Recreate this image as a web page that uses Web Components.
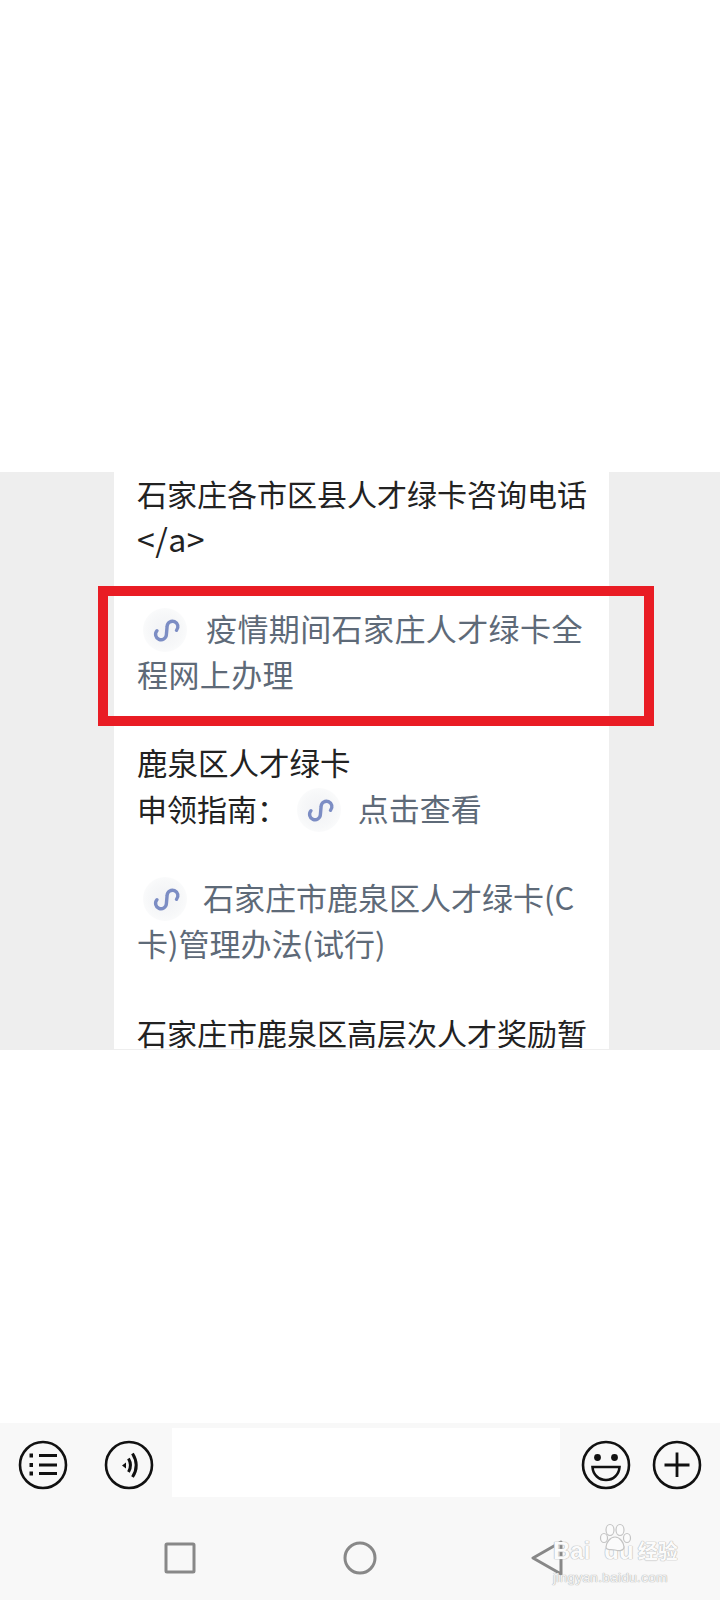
<!DOCTYPE html>
<html lang="zh">
<head>
<meta charset="utf-8">
<title>chat</title>
<style>
    html,body{margin:0;padding:0;background:#fff}
    body{font-family:"Noto Sans CJK SC","Liberation Sans",sans-serif}
</style>
</head>
<body>
<template id="miniTmpl">
    <style>
        /* line-height 0: the bigger font must not grow the 45.5px line */
        :host{display:inline;color:#5e6a78;font-size:31px;line-height:0}
        .ico{display:inline-block;width:var(--ico-w,69px);height:30px;vertical-align:-5px;position:relative}
        .glow{position:absolute;left:var(--glow-x,6px);top:-8px;width:44px;height:44px;border-radius:50%;background:radial-gradient(circle,#f1f2f5 0,#f7f8f9 55%,#fff 100%)}
        svg{position:absolute;left:var(--svg-x,14px);top:0}
    </style>
    <span class="ico"><span class="glow"></span><svg width="32" height="30" viewBox="0 0 32 30" fill="none"><path d="M6 14.700A5.400 5.400 0 1 0 15.400 18.500L16.100 10.500A5.400 5.400 0 1 1 25.500 14.300" stroke="#7c8dc4" stroke-width="3.400" stroke-linecap="round"/></svg></span><slot></slot>
</template>

<template id="bandTmpl">
    <style>
        :host{display:block;height:578px;background:#eeeeee;overflow:hidden;position:relative;flex:none}
        .col{margin-left:114px;width:495px;height:100%;background:#fff;box-sizing:border-box;padding:0 20px 0 23px;color:#222;font-size:30px;line-height:45.5px}
        .box{position:absolute;left:98px;top:114px;width:556px;height:140px;box-sizing:border-box;border:10px solid #e91c24}
    </style>
    <div class="col"><slot></slot></div>
    <div class="box"></div>
</template>

<template id="paraTmpl">
    <style>
        :host{display:block;white-space:nowrap;margin-bottom:var(--gap,43px)}
    </style>
    <slot></slot>
</template>

<template id="barTmpl">
    <style>
        :host{display:block;background:#f8f8f8;flex:none;height:177px;box-sizing:border-box;padding-top:5px;position:relative}
        .row{display:flex;align-items:center;height:69px}
        svg{display:block;flex:none}
        .input{width:388px;height:69px;background:#fff;margin:0 21px 0 18px;flex:none}
        .up{margin-top:5px}
        .sp1{margin-left:18px}
        .sp2{margin-left:36px}
        .sp4{margin-left:21px}
        .nav{display:flex;align-items:center;height:36px;margin-top:43px}
        .n1{margin-left:164px}
        .n2{margin-left:147px}
        .n3{margin-left:154px}
    </style>
    <div class="row">
        <svg class="sp1 up" width="50" height="50" viewBox="0 0 50 50" fill="none" stroke="#111" stroke-width="2.600"><circle cx="25" cy="25" r="23"/><path d="M21 15.500H39M21 25H39M21 33.500H39" stroke-width="3"/><path d="M11.500 15.500H15M11.500 25H15M11.500 33.500H15" stroke-width="4"/></svg>
        <svg class="sp2 up" width="50" height="50" viewBox="0 0 50 50" fill="none" stroke="#111" stroke-width="2.600"><circle cx="25" cy="25" r="23"/><path d="M18 25.500l4-3v6z" fill="#111" stroke="none"/><path d="M24.500 18.500Q28.500 25.500 24.500 32" stroke-width="3"/><path d="M28.500 13.500Q36 25.500 28.500 37" stroke-width="3"/></svg>
        <div class="input"></div>
        <svg class="up" width="50" height="50" viewBox="0 0 50 50" fill="none" stroke="#111" stroke-width="2.600"><circle cx="25" cy="25" r="23"/><circle cx="16.500" cy="17.500" r="3.400" fill="#111" stroke="none"/><circle cx="33.500" cy="17.500" r="3.400" fill="#111" stroke="none"/><path d="M11.500 27H38.500C38 35 32 40 25 40S12 35 11.500 27Z"/></svg>
        <svg class="sp4 up" width="50" height="50" viewBox="0 0 50 50" fill="none" stroke="#111" stroke-width="2.600"><circle cx="25" cy="25" r="23"/><path d="M25 12.500V37M12.500 25H37.500" stroke-width="2.800"/></svg>
    </div>
    <div class="nav">
        <svg class="n1" width="32" height="32" viewBox="0 0 32 32" fill="none" stroke="#888" stroke-width="3"><rect x="2" y="2" width="28" height="28" rx="1"/></svg>
        <svg class="n2" width="34" height="34" viewBox="0 0 34 34" fill="none" stroke="#888" stroke-width="3"><circle cx="17" cy="17" r="15"/></svg>
        <svg class="n3" width="32" height="36" viewBox="0 0 32 36" fill="none" stroke="#888" stroke-width="3" stroke-linejoin="round"><path d="M30 2L2 18 30 34Z"/></svg>
    </div>
    <slot></slot>
</template>

<template id="markTmpl">
    <style>
        :host{display:block;position:absolute;left:553px;top:104px;width:130px;height:60px;font-family:"Liberation Sans",sans-serif;color:#fbfbfb}
        .logo{display:flex;align-items:center;height:36px;font-size:24px;font-weight:bold;line-height:30px;margin-top:6px;text-shadow:0 0 1px #bbb,0 0 1px #bbb,0 0 1px #bbb}
        .gap{width:14px}
        .cn{font-family:"Noto Sans CJK SC",sans-serif;font-size:20px;margin-left:4px}
        .url{font-size:13.500px;line-height:16px;letter-spacing:.35px;margin-top:1px;color:#f6f6f6;text-shadow:0 0 1px #aaa,0 0 1px #aaa}
        svg{position:absolute;left:43px;top:-4px}
    </style>
    <svg width="36" height="30" viewBox="0 0 36 30" fill="#fbfbfb" stroke="#c4c4c4" stroke-width="1.200"><ellipse cx="8" cy="15" rx="3.500" ry="4.500"/><ellipse cx="14" cy="7" rx="4" ry="5.500"/><ellipse cx="24" cy="7" rx="4" ry="5.500"/><ellipse cx="31" cy="15" rx="3.500" ry="4.500"/><path d="M19 14c5 0 9 6 9 10s-5 4-9 3-9 1-9-3 4-10 9-10z"/></svg>
    <div class="logo"><span>Bai</span><span class="gap"></span><span>du</span><span class="cn">经验</span></div>
    <div class="url">jingyan.baidu.com</div>
</template>

<template id="pageTmpl">
    <style>
        :host{display:flex;flex-direction:column;height:1600px;width:720px;background:#fff;overflow:hidden}
        .top{height:472px;flex:none}
    </style>
    <div class="top"></div>
    <slot></slot>
</template>

<chat-page>
    <article-band>
        <text-para style="margin-top:-1px;--gap:44px">石家庄各市区县人才绿卡咨询电话<br><span style="font-size:32px;letter-spacing:.5px;line-height:0">&lt;/a&gt;</span></text-para>
        <text-para><mini-link style="letter-spacing:.4px">疫情期间石家庄人才绿卡全<br>程网上办理</mini-link></text-para>
        <text-para style="--gap:44px"><span style="font-size:30.500px;line-height:0">鹿泉区人才绿卡</span><br>申领指南： <mini-link style="--ico-w:64px;--glow-x:3px;--svg-x:11px">点击查看</mini-link></text-para>
        <text-para style="--gap:44px"><mini-link style="--ico-w:66px">石家庄市鹿泉区人才绿卡(C<br>卡)管理办法(试行)</mini-link></text-para>
        <text-para>石家庄市鹿泉区高层次人才奖励暂</text-para>
    </article-band>
    <div style="flex:1"></div>
    <chat-bar><baidu-mark></baidu-mark></chat-bar>
</chat-page>

<script>
class TmplElement extends HTMLElement{
    constructor(){
        super();
        const t = document.getElementById(this.constructor.tmplId);
        this.attachShadow({mode:'open'}).appendChild(t.content.cloneNode(true));
    }
}
class ChatPage extends TmplElement{ static tmplId = 'pageTmpl'; }
class ArticleBand extends TmplElement{ static tmplId = 'bandTmpl'; }
class TextPara extends TmplElement{ static tmplId = 'paraTmpl'; }
class MiniLink extends TmplElement{ static tmplId = 'miniTmpl'; }
class ChatBar extends TmplElement{ static tmplId = 'barTmpl'; }
class BaiduMark extends TmplElement{ static tmplId = 'markTmpl'; }
customElements.define('chat-page', ChatPage);
customElements.define('article-band', ArticleBand);
customElements.define('text-para', TextPara);
customElements.define('mini-link', MiniLink);
customElements.define('chat-bar', ChatBar);
customElements.define('baidu-mark', BaiduMark);
</script>
</body>
</html>
